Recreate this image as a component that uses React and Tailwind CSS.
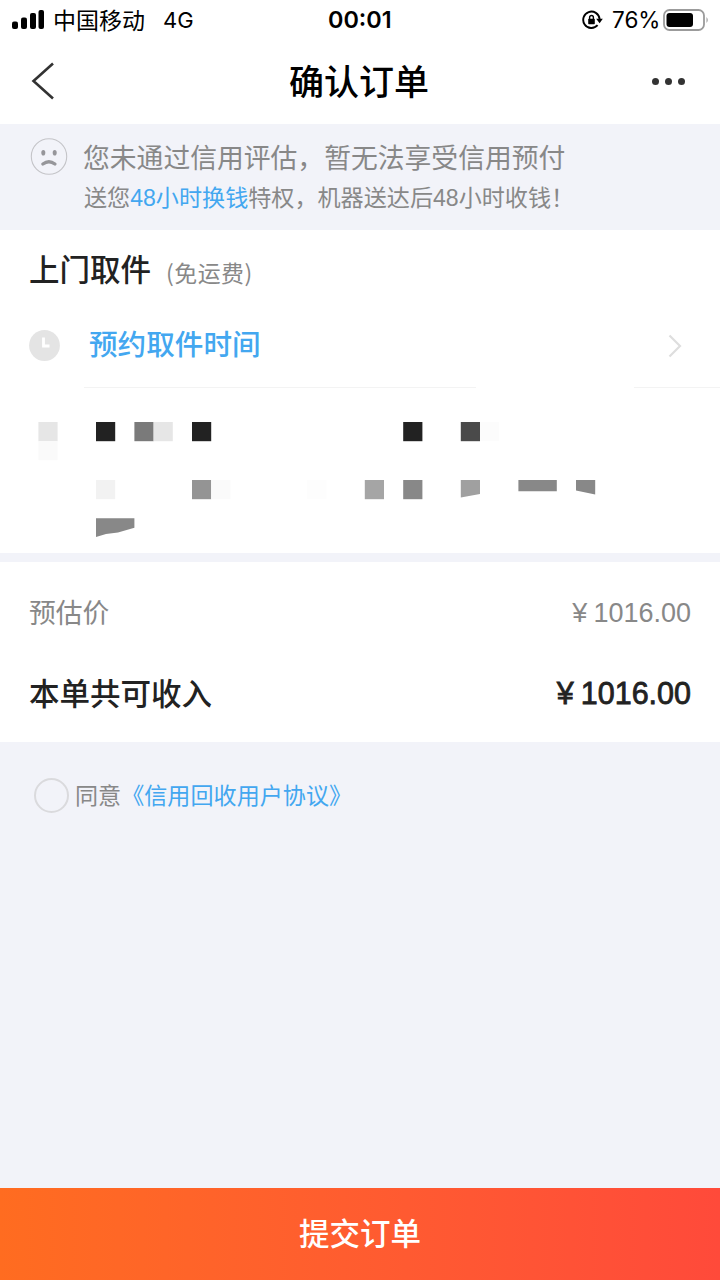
const cell = 19.2;

// Redacted address block: [column, top, fill]
const blocks = [
  [2, 422, "#e6e6e6"],
  [2, 441, "#fafafa"],
  [5, 422, "#222222"],
  [7, 422, "#7a7a7a"],
  [8, 422, "#e6e6e6"],
  [10, 422, "#222222"],
  [21, 422, "#222222"],
  [24, 422, "#4a4a4a"],
  [25, 422, "#fcfcfc"],
  [5, 480, "#f2f2f2"],
  [10, 480, "#949494"],
  [11, 480, "#fafafa"],
  [16, 480, "#fdfdfd"],
  [19, 480, "#a5a5a5"],
  [21, 480, "#888888"],
];

function StatusBar() {
  return (
    <div className="flex h-10 items-center bg-white text-black">
      <svg className="ml-3 h-5 w-8 shrink-0" viewBox="0 0 32 20">
        <rect x="0" y="11.5" width="6" height="7.5" rx="2" />
        <rect x="9" y="7.5" width="6" height="11.5" rx="2" />
        <rect x="18" y="3" width="6" height="16" rx="2" />
        <rect x="26.5" y="0" width="5.5" height="19" rx="2" />
      </svg>
      <span className="ml-[9px] w-[110px] pt-px text-[23px] leading-10">中国移动</span>
      <span className="w-[165px] font-['Inter'] text-[22px] leading-10">4G</span>
      <span className="w-[254px] font-['Inter'] text-[23.4px] leading-10 font-semibold">00:01</span>
      <svg className="h-5 w-[21px] shrink-0" viewBox="0 0 21 20" fill="none" stroke="currentColor">
        <path d="M17.6 9A8.2 8.2 0 1 0 15.6 15.2" strokeWidth="1.9" />
        <path d="M14.2 8.8h6.6l-3.2 4.4z" fill="currentColor" stroke="none" />
        <rect x="6.2" y="8.8" width="6.6" height="5.4" rx="0.7" fill="currentColor" stroke="none" />
        <path d="M7.6 9V7.4a1.9 1.9 0 0 1 3.8 0V9" strokeWidth="1.4" />
      </svg>
      <span className="ml-[9px] w-[51px] font-['Inter'] text-[22.5px] leading-10">76%</span>
      <svg className="h-[22px] w-[47px] shrink-0" viewBox="0 0 47 22">
        <rect x="1" y="1" width="40" height="20" rx="5.5" fill="none" stroke="#9b9b9b" strokeWidth="1.8" />
        <rect x="3.5" y="4" width="26.5" height="14" rx="3" />
        <path d="M43.5 8q2.5 3 0 6z" fill="#9b9b9b" />
      </svg>
    </div>
  );
}

function NavBar() {
  return (
    <div className="flex h-21 items-center justify-between bg-white pr-[35px] pl-[31px]">
      <svg className="-mt-[3px] h-[38px] w-6" viewBox="0 0 24 38" fill="none" stroke="#333" strokeWidth="2.6">
        <path d="M22 1.5L2.5 19L22 36.5" />
      </svg>
      <h1 className="ml-[11px] text-[35px] leading-none font-medium text-black">确认订单</h1>
      <div className="-mt-[2px] flex gap-1.5">
        <i className="size-[7px] rounded-full bg-[#333]" />
        <i className="size-[7px] rounded-full bg-[#333]" />
        <i className="size-[7px] rounded-full bg-[#333]" />
      </div>
    </div>
  );
}

function Notice() {
  return (
    <div className="flex h-[106px] bg-[#f2f3f9] pt-[13px] pl-[30px] text-[#888]">
      <svg className="mt-px h-[38px] w-[38px] shrink-0" viewBox="0 0 38 38" fill="none">
        <circle cx="19" cy="18.5" r="17.7" stroke="#c4c4c8" strokeWidth="1.1" />
        <ellipse cx="13.3" cy="14.7" rx="2" ry="2.8" fill="#96969a" />
        <ellipse cx="24.7" cy="14.7" rx="2" ry="2.8" fill="#96969a" />
        <path d="M12.9 26q6-4.4 12 0" stroke="#96969a" strokeWidth="3.4" strokeLinecap="round" />
      </svg>
      <div className="ml-[15px] pt-0.5 whitespace-nowrap">
        <p className="text-[26.8px] leading-10">您未通过信用评估，暂无法享受信用预付</p>
        <p className="ml-px text-[23.1px] leading-[38px]">
          送您<span className="text-[#43a7f0]">48小时换钱</span>特权，机器送达后48小时收钱！
        </p>
      </div>
    </div>
  );
}

function Pickup() {
  return (
    <section className="h-[323px] bg-white">
      <div className="flex h-[78px] items-start pl-[29px] leading-10">
        <h2 className="pt-5 text-[30.5px] font-medium text-[#222]">上门取件</h2>
        <span className="ml-[15px] pt-[22px] font-['Noto_Sans_CJK_SC',sans-serif] text-[22.9px] tracking-[0.5px] text-[#888]">(免运费)</span>
      </div>
      <div className="flex h-[79px] items-start pl-[29px]">
        <svg className="mt-[22px] size-[31px]" viewBox="0 0 31 31">
          <circle cx="15.5" cy="15.5" r="15.4" fill="#e4e4e4" />
          <path d="M14.5 7.5v8.5h6" fill="none" stroke="#fff" strokeWidth="2.8" />
        </svg>
        <span className="mt-[17px] ml-[29px] text-[28.6px] leading-10 font-medium text-[#43a7f0]">预约取件时间</span>
        <svg className="mt-[26px] mr-[38px] ml-auto h-6 w-[14px]" viewBox="0 0 14 24" fill="none" stroke="#dedede" strokeWidth="2.2">
          <path d="M1.5 1.5L12 12L1.5 22.5" />
        </svg>
      </div>
      <div className="flex h-px justify-between pl-[84px]">
        <div className="w-[392px] bg-[#f3f3f3]" />
        <div className="w-[86px] bg-[#f3f3f3]" />
      </div>
      <svg className="h-[165px] w-full" viewBox="0 388 720 165">
        {blocks.map(([col, top, fill]) => (
          <rect key={`${col}-${top}`} x={col * cell} y={top} width={cell} height={19.2} fill={fill} />
        ))}
        <path d="M460.8 480H480v14l-19.2 3.6z" fill="#a0a0a0" />
        <path d="M518.4 480h38.4v11.3h-38.4z" fill="#888" />
        <path d="M576 480h19.2v14.5L576 490.5z" fill="#888" />
        <path d="M96 518.2h38.4v9.6L118 532.6L106 534L96 537z" fill="#888" />
      </svg>
    </section>
  );
}

function Summary() {
  return (
    <section className="mt-[9px] h-[180px] bg-white px-[29px]">
      <div className="flex h-20 items-end justify-between pb-2 leading-10 text-[#888]">
        <span className="text-[26.8px]">预估价</span>
        <span className="flex pb-px text-[27px]">
          <span className="mr-1.5">¥</span>
          <span>1016.00</span>
        </span>
      </div>
      <div className="flex h-20 items-end justify-between pb-2 leading-10 text-[#222]">
        <span className="text-[30.5px] font-medium">本单共可收入</span>
        <span className="flex pb-px text-[30.5px] [-webkit-text-stroke:0.8px_#222]">
          <span className="mr-[7px]">¥</span>
          <span>1016.00</span>
        </span>
      </div>
    </section>
  );
}

export default function App() {
  return (
    <div className="flex h-[1280px] w-[720px] flex-col overflow-hidden bg-[#f2f3f9] font-['Liberation_Sans','Noto_Sans_CJK_SC',sans-serif]" lang="zh-CN">
      <StatusBar />
      <NavBar />
      <Notice />
      <Pickup />
      <Summary />
      <label className="mt-[33px] flex h-10 items-center pl-[34px] text-[23.1px] whitespace-nowrap text-[#888]">
        <span className="mr-1.5 size-[35px] rounded-full border-[2.5px] border-[#dadadd]" />
        <span className="pt-0.5">同意</span>
        <span className="flex items-center pt-0.5 text-[#43a7f0]">
          《信用回收用户协议》
        </span>
      </label>
      <button className="mt-auto h-[92px] bg-linear-to-r from-[#ff6c20] to-[#ff4a3a] pt-px text-[30.5px] font-medium text-white">
        提交订单
      </button>
    </div>
  );
}
